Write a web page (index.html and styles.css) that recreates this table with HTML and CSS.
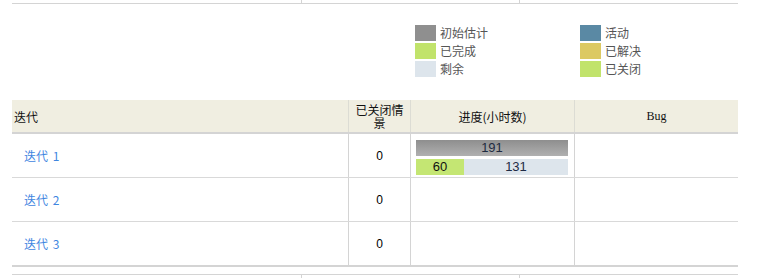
FILE: index.html
```html
<!DOCTYPE html>
<html lang="zh">
<head>
<meta charset="utf-8">
<link rel="stylesheet" href="styles.css">
</head>
<body>
<div class="page">
  <div class="stub stub-top">
    <div class="stub-cell s1"></div>
    <div class="stub-cell s2"></div>
    <div class="stub-cell s3"></div>
  </div>

  <div class="legend">
    <div class="legend-item"><span class="sw sw-gray"></span>初始估计</div>
    <div class="legend-item"><span class="sw sw-blue"></span>活动</div>
    <div class="legend-item"><span class="sw sw-green"></span>已完成</div>
    <div class="legend-item"><span class="sw sw-yellow"></span>已解决</div>
    <div class="legend-item"><span class="sw sw-light"></span>剩余</div>
    <div class="legend-item"><span class="sw sw-green"></span>已关闭</div>
  </div>

  <div class="grid">
    <div class="row head">
      <div class="cell c1">迭代</div>
      <div class="cell c2">已关闭情景</div>
      <div class="cell c3">进度(小时数)</div>
      <div class="cell c4 bug">Bug</div>
    </div>
    <div class="row body">
      <div class="cell c1"><a class="link" href="#">迭代 1</a></div>
      <div class="cell c2 num">0</div>
      <div class="cell c3 prog">
        <div class="bar bar-est">191</div>
        <div class="bar bar-split">
          <div class="seg seg-done" style="width:48px">60</div>
          <div class="seg seg-rem">131</div>
        </div>
      </div>
      <div class="cell c4"></div>
    </div>
    <div class="row body">
      <div class="cell c1"><a class="link" href="#">迭代 2</a></div>
      <div class="cell c2 num">0</div>
      <div class="cell c3"></div>
      <div class="cell c4"></div>
    </div>
    <div class="row body last">
      <div class="cell c1"><a class="link" href="#">迭代 3</a></div>
      <div class="cell c2 num">0</div>
      <div class="cell c3"></div>
      <div class="cell c4"></div>
    </div>
  </div>

  <div class="stub stub-bottom">
    <div class="stub-cell s1"></div>
    <div class="stub-cell s2"></div>
    <div class="stub-cell s3"></div>
  </div>
</div>
</body>
</html>
```

FILE: styles.css
```css
html, body {
  margin: 0;
  padding: 0;
  background: #ffffff;
}
body {
  font-family: "Noto Sans CJK SC", "Liberation Sans", sans-serif;
  font-size: 12px;
  color: #222;
  overflow: hidden;
}
.page {
  padding-left: 12px;
  width: 726px;
}

/* fragments of neighbouring tables */
.stub {
  display: flex;
  width: 726px;
}
.stub-top {
  height: 3px;
  border-bottom: 1px solid #d4d4d4;
}
.stub-bottom {
  margin-top: 7px;
  height: 10px;
  border-top: 1px solid #d4d4d4;
}
.stub-cell {
  height: 100%;
}
.s1 { width: 289px; }
.s2 { width: 217px; border-left: 1px solid #d4d4d4; }
.s3 { width: 218px; border-left: 1px solid #d4d4d4; }
.stub-bottom .s3 { width: 216px; }

/* legend */
.legend {
  margin-left: 403px;
  margin-top: 21px;
  margin-bottom: 23px;
  display: grid;
  grid-template-columns: 165px auto;
  row-gap: 2px;
}
.legend-item {
  display: flex;
  align-items: center;
  height: 16px;
  color: #555;
  font-size: 12px;
  line-height: 16px;
}
.sw {
  display: inline-block;
  width: 21px;
  height: 16px;
  margin-right: 4px;
}
.sw-gray { background: #8f8f8f; }
.sw-blue { background: #5a89a4; }
.sw-green { background: #c1e36b; }
.sw-yellow { background: #dcc962; }
.sw-light { background: #dde5ec; }

/* grid table */
.grid {
  width: 726px;
}
.row {
  display: flex;
}
.cell {
  box-sizing: border-box;
}
.c1 { width: 336px; }
.c2 { width: 62px; border-left: 1px solid #d4d4d4; }
.c3 { width: 164px; border-left: 1px solid #d4d4d4; }
.c4 { width: 164px; border-left: 1px solid #d4d4d4; }

.head {
  background: #f0eee1;
  height: 34px;
  border-bottom: 2px solid #d4d4d4;
  box-sizing: border-box;
}
.head .cell {
  display: flex;
  align-items: center;
  color: #111;
  line-height: 13px;
  border-left-color: #dcdcd4;
}
.head .c1 {
  padding-left: 2px;
}
.head .c2,
.head .c3,
.head .c4 {
  justify-content: center;
  text-align: center;
}
.head .c2 {
  padding: 0 3px;
}
.head .bug {
  font-family: "Liberation Serif", "DejaVu Serif", serif;
  font-size: 12px;
}

.body {
  height: 44px;
  border-bottom: 1px solid #d9d9d9;
  box-sizing: border-box;
}
.body.last {
  height: 45px;
  border-bottom: 2px solid #d4d4d4;
}
.body .c1 {
  display: flex;
  align-items: center;
  padding-left: 12px;
}
.link {
  color: #3f86df;
  text-decoration: none;
  word-spacing: 2px;
}
.num {
  display: flex;
  align-items: center;
  justify-content: center;
  font-family: "Liberation Sans", sans-serif;
  color: #000;
}
.prog {
  padding: 6px 0 0 5px;
}
.bar {
  width: 152px;
  height: 16px;
  font-family: "Liberation Sans", sans-serif;
  font-size: 13px;
  line-height: 16px;
  text-align: center;
}
.bar-est {
  background: linear-gradient(#8e8e8e, #b0b0b0);
  color: #1e2a40;
}
.bar-split {
  display: flex;
  margin-top: 3px;
}
.seg-done {
  background: #c4e673;
  color: #111;
}
.seg-rem {
  flex: 1;
  background: #dde5ec;
  color: #1e2a44;
}
```
